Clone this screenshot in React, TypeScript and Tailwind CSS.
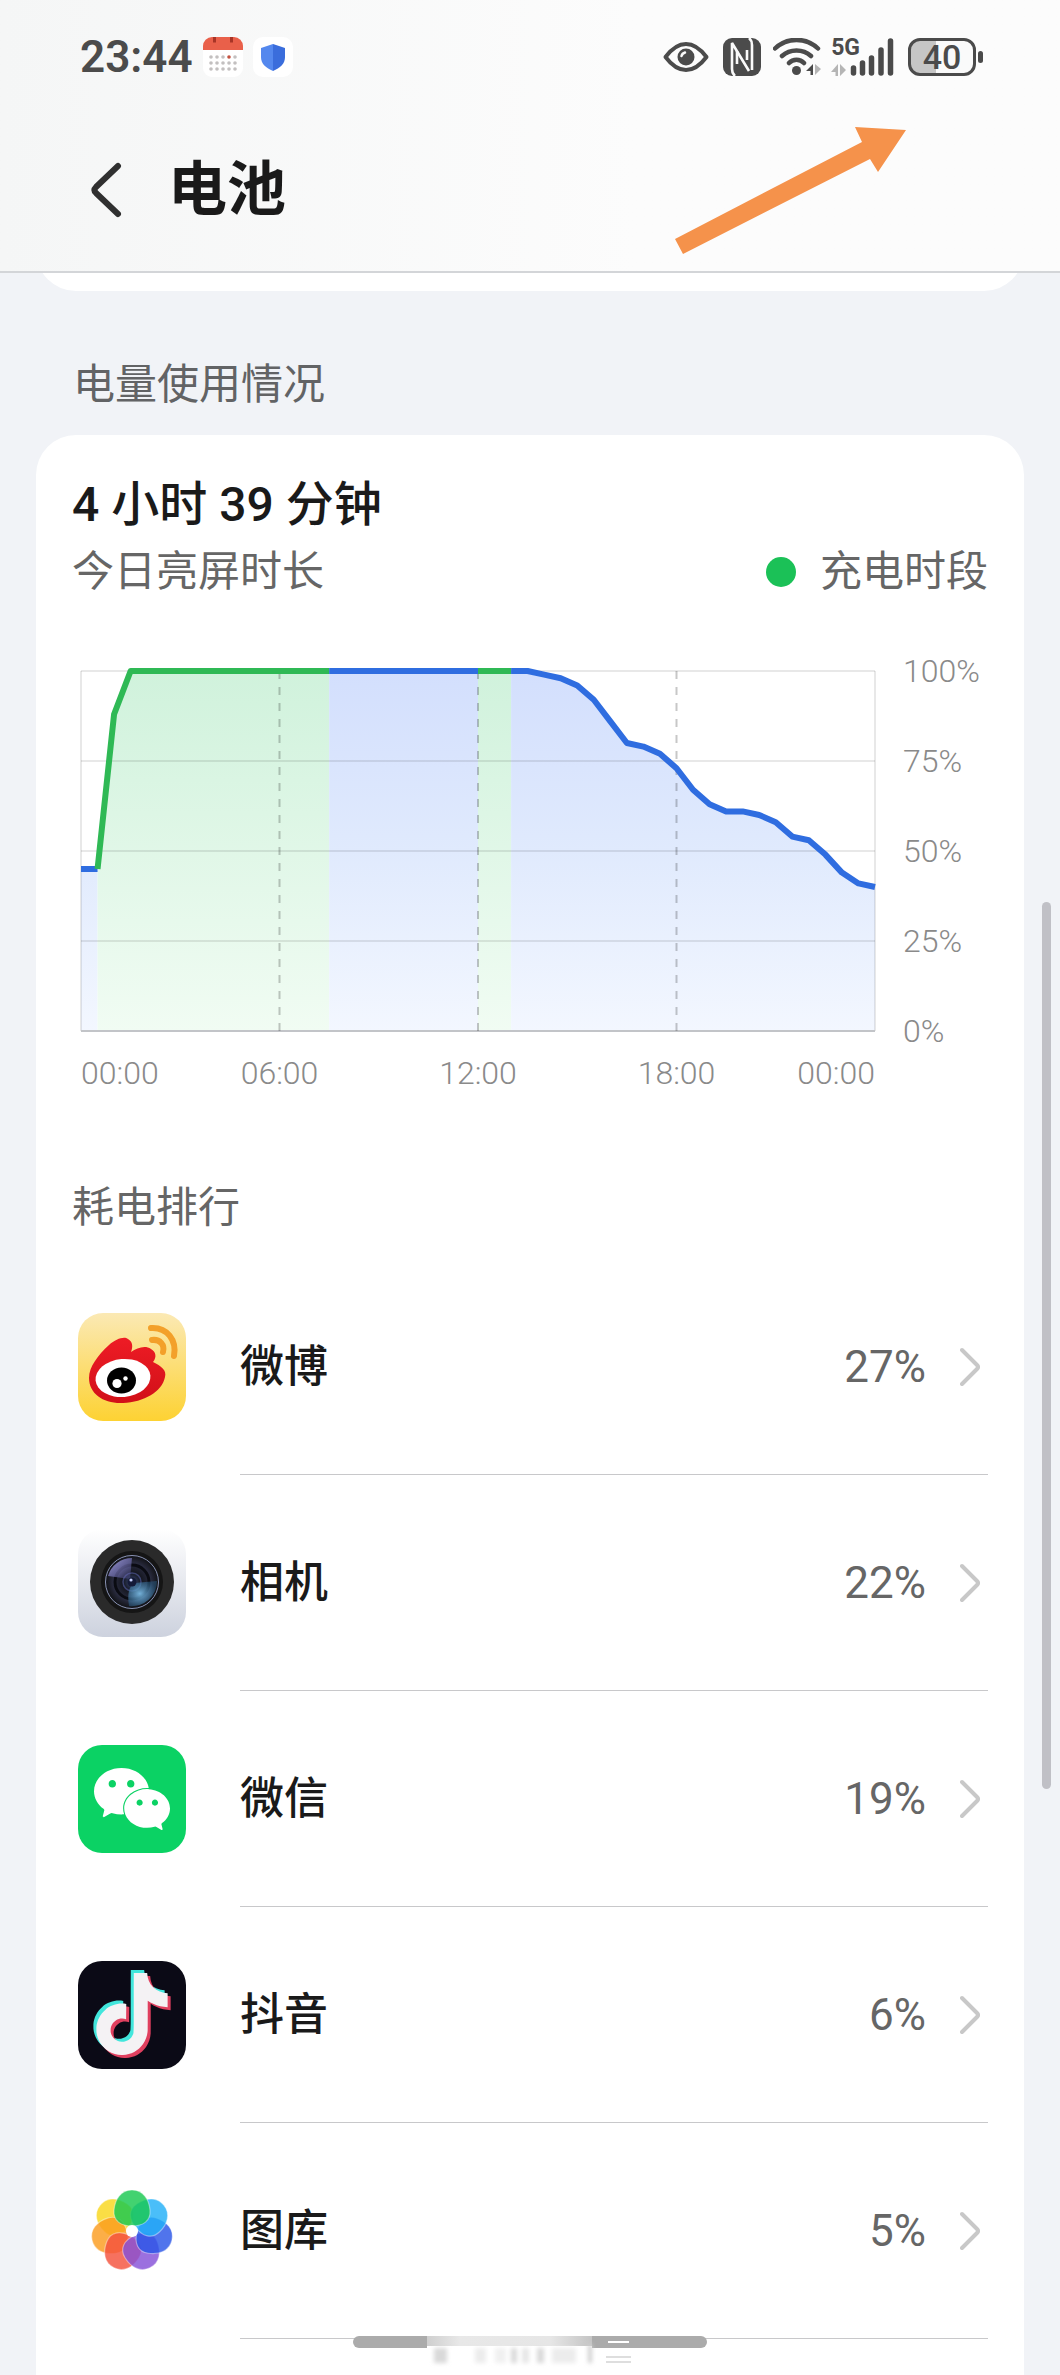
import type { ReactNode } from 'react';
import { SiTiktok, SiWechat } from 'react-icons/si';

interface AppUsage {
  name: string;
  percent: number;
  icon: ReactNode;
}

// Battery level, one reading every 30 minutes
const levels = [
  45, 45, 88, 100, 100, 100, 100, 100, 100, 100, 100, 100, 100, 100, 100, 100, 100,
  100, 100, 100, 100, 100, 100, 100, 100, 100, 100, 100, 99, 98, 96, 92, 86,
  80, 79, 77, 73, 67, 63, 61, 61, 60, 58, 54, 53, 49, 44, 41, 40,
];

const segments = [
  { from: 0, to: 1, charging: false },
  { from: 1, to: 15, charging: true },
  { from: 15, to: 24, charging: false },
  { from: 24, to: 26, charging: true },
  { from: 26, to: 48, charging: false },
];

const CHART_W = 794;
const CHART_H = 360;

const px = (i: number) => (i * CHART_W) / 48;
const py = (level: number) => CHART_H - (level * CHART_H) / 100;

function linePoints(from: number, to: number) {
  return levels
    .slice(from, to + 1)
    .map((level, i) => `${px(from + i)},${py(level)}`)
    .join(' ');
}

function BatteryChart() {
  return (
    <svg viewBox={`0 0 ${CHART_W} ${CHART_H}`} className="block w-full overflow-visible" role="img" aria-label="电量曲线">
      <defs>
        <linearGradient id="fillBlue" gradientUnits="userSpaceOnUse" x1="0" y1="0" x2="0" y2={CHART_H}>
          <stop offset="0" stopColor="#d3dffd" />
          <stop offset="0.5" stopColor="#e0eafd" />
          <stop offset="1" stopColor="#f3f7ff" />
        </linearGradient>
        <linearGradient id="fillGreen" gradientUnits="userSpaceOnUse" x1="0" y1="0" x2="0" y2={CHART_H}>
          <stop offset="0" stopColor="#d0f2dc" />
          <stop offset="1" stopColor="#f1fcf3" />
        </linearGradient>
      </defs>
      {segments.map((s) => (
        <polygon
          key={s.from}
          points={`${px(s.from)},${CHART_H} ${linePoints(s.from, s.to)} ${px(s.to)},${CHART_H}`}
          fill={s.charging ? 'url(#fillGreen)' : 'url(#fillBlue)'}
        />
      ))}
      <g stroke="#000" strokeOpacity="0.12" strokeWidth="1.5">
        {[0, 90, 180, 270].map((y) => (
          <line key={y} x1="0" x2={CHART_W} y1={y} y2={y} />
        ))}
        <line x1="0" x2="0" y1="0" y2={CHART_H} />
        <line x1={CHART_W} x2={CHART_W} y1="0" y2={CHART_H} />
      </g>
      <line x1="0" x2={CHART_W} y1={CHART_H} y2={CHART_H} stroke="#c2c4c8" strokeWidth="2" />
      {[12, 24, 36].map((i) => (
        <line key={i} x1={px(i)} x2={px(i)} y1="0" y2={CHART_H} stroke="#000" strokeOpacity="0.22" strokeWidth="2" strokeDasharray="8 8" />
      ))}
      {segments.map((s) => (
        <polyline
          key={s.from}
          points={linePoints(s.from, s.to)}
          fill="none"
          stroke={s.charging ? '#2fb955' : '#2f6de0'}
          strokeWidth="6"
          strokeLinejoin="round"
        />
      ))}
    </svg>
  );
}

function WeiboIcon() {
  return (
    <svg viewBox="0 0 108 108" className="size-27">
      <defs>
        <linearGradient id="weiboBg" x1="0" y1="0" x2="0" y2="1">
          <stop offset="0" stopColor="#fbe9b4" />
          <stop offset="1" stopColor="#fdd233" />
        </linearGradient>
        <linearGradient id="weiboRed" x1="0" y1="0" x2="0" y2="1">
          <stop offset="0" stopColor="#ee1c25" />
          <stop offset="1" stopColor="#d11018" />
        </linearGradient>
      </defs>
      <rect width="108" height="108" rx="25" fill="url(#weiboBg)" />
      <path
        d="M11 65C11 54 20 42 31 32C38 26 46 23 50 26C55 29 55 34 53 39C59 35 67 32 73 36C78 39 79 44 75 49C83 53 89 57 87 64C84 79 66 89 45 90C26 91 11 81 11 65Z"
        fill="url(#weiboRed)"
      />
      <ellipse cx="45" cy="65" rx="27.500" ry="19" fill="#fff" transform="rotate(-5 45 65)" />
      <ellipse cx="43.500" cy="67.500" rx="14.500" ry="13" fill="#000" />
      <circle cx="39" cy="70.500" r="4.600" fill="#fff" />
      <circle cx="47.500" cy="65.500" r="2.200" fill="#fff" />
      <g fill="none" stroke="#f3a02a" strokeWidth="6" strokeLinecap="round">
        <path d="M73 15C89 14 99 27 96 43" />
        <path d="M74 27C82 26 87 32 85 39" />
      </g>
    </svg>
  );
}

function CameraIcon() {
  return (
    <svg viewBox="0 0 108 108" className="size-27">
      <defs>
        <linearGradient id="camBg" x1="0" y1="0" x2="0" y2="1">
          <stop offset="0" stopColor="#ffffff" />
          <stop offset="1" stopColor="#cdd2de" />
        </linearGradient>
        <radialGradient id="camLens" cx="0.5" cy="0.5" r="0.5">
          <stop offset="0" stopColor="#3b4a78" />
          <stop offset="0.35" stopColor="#14161f" />
          <stop offset="0.7" stopColor="#2a2c40" />
          <stop offset="1" stopColor="#101114" />
        </radialGradient>
        <radialGradient id="camBlue" cx="0.4" cy="0.5" r="0.6">
          <stop offset="0" stopColor="#78b7e0" stopOpacity="0.95" />
          <stop offset="1" stopColor="#2b6490" stopOpacity="0.45" />
        </radialGradient>
        <linearGradient id="camViolet" x1="0" y1="0" x2="1" y2="1">
          <stop offset="0" stopColor="#b3aef2" />
          <stop offset="1" stopColor="#5a5aa8" stopOpacity="0.25" />
        </linearGradient>
      </defs>
      <rect width="108" height="108" rx="25" fill="url(#camBg)" />
      <circle cx="54" cy="53" r="42" fill="#2a2a2a" />
      <circle cx="54" cy="53" r="31" fill="#151515" />
      <circle cx="54" cy="53" r="26.5" fill="url(#camLens)" stroke="#8a93b5" strokeWidth="1" />
      <circle cx="54" cy="53" r="17" fill="none" stroke="#0a0b12" strokeWidth="3" />
      <circle cx="54" cy="53" r="9" fill="none" stroke="#3c4370" strokeWidth="1.5" />
      <path d="M52 50L30 47A25 25 0 0 1 54 29Z" fill="url(#camViolet)" />
      <path d="M56 54L79 52A25 25 0 0 1 51 77C49 65 51 58 56 54Z" fill="url(#camBlue)" />
      <circle cx="54" cy="53" r="4.5" fill="#141a38" />
      <circle cx="53" cy="51" r="1.6" fill="#c9d3ff" />
    </svg>
  );
}

function WechatIcon() {
  return (
    <div className="flex size-27 items-center justify-center rounded-3xl bg-[#0bd264] text-white">
      <SiWechat className="size-19" />
    </div>
  );
}

function DouyinIcon() {
  return (
    <div className="grid size-27 place-items-center rounded-3xl bg-[#0b0a16]">
      <svg viewBox="0 0 90 90" className="size-[90px]">
        <SiTiktok x="1" y="0" size={82} color="#42e6dc" />
        <SiTiktok x="7" y="6" size={82} color="#e0405f" />
        <SiTiktok x="4" y="3" size={82} color="#f4f2f4" />
      </svg>
    </div>
  );
}

const petals = [
  { angle: 129, color: '#f9d71c' },
  { angle: 77, color: '#fb9c1e' },
  { angle: 26, color: '#f4523c' },
  { angle: -26, color: '#8550d8' },
  { angle: -77, color: '#2a55e8' },
  { angle: -129, color: '#22b0f8' },
  { angle: 180, color: '#18c850' },
];

function GalleryIcon() {
  return (
    <svg viewBox="0 0 108 108" className="size-27">
      <g transform="translate(54 54)">
        {petals.map((p) => (
          <path
            key={p.angle}
            transform={`rotate(${p.angle})`}
            d="M0 41C11 41 17 32 18 21C19 10 11 5 0 5C-11 5 -19 10 -18 21C-17 32 -11 41 0 41Z"
            fill={p.color}
            fillOpacity="0.82"
            stroke="#fff"
            strokeOpacity="0.4"
            strokeWidth="1.2"
          />
        ))}
        <circle r="6" fill="#fff" />
      </g>
    </svg>
  );
}

const apps: AppUsage[] = [
  { name: '微博', percent: 27, icon: <WeiboIcon /> },
  { name: '相机', percent: 22, icon: <CameraIcon /> },
  { name: '微信', percent: 19, icon: <WechatIcon /> },
  { name: '抖音', percent: 6, icon: <DouyinIcon /> },
  { name: '图库', percent: 5, icon: <GalleryIcon /> },
];

function CalendarBadge() {
  return (
    <svg viewBox="0 0 40 40" className="size-10">
      <rect width="40" height="40" rx="9" fill="#fff" />
      <path d="M0 13V9A9 9 0 0 1 9 0H31A9 9 0 0 1 40 9V13Z" fill="#e9604a" />
      <path d="M11.500 0V5.500M28.500 0V5.500" stroke="#a83426" strokeWidth="3" />
      {[20, 26, 32].map((y) =>
        [8, 14, 20, 26, 32].map((x) => (
          <circle key={`${x}-${y}`} cx={x} cy={y} r="1.8" fill={x === 26 && y === 20 ? '#c4513f' : '#c3c0c0'} />
        ))
      )}
    </svg>
  );
}

function ShieldBadge() {
  return (
    <svg viewBox="0 0 40 40" className="size-10">
      <rect width="40" height="40" rx="10" fill="#fff" />
      <path d="M20 7L8 11V20C8 27 13 31 20 34Z" fill="#5488ee" />
      <path d="M20 7L32 11V20C32 27 27 31 20 34Z" fill="#3a6ddc" />
    </svg>
  );
}

function StatusBar() {
  return (
    <div className="flex items-center justify-between pt-8 pr-[77px] pl-20 text-[#4b4b4b]">
      <div className="flex items-center gap-2.5">
        <span className="font-[Roboto] text-[44px] leading-[50px] font-semibold">23:44</span>
        <div className="flex gap-2.5">
          <CalendarBadge />
          <ShieldBadge />
        </div>
      </div>
      <div className="flex items-center">
        <svg viewBox="0 0 46 32" className="h-8 w-[46px]" fill="none" stroke="currentColor" strokeWidth="4">
          <path d="M2.500 16C10 6 17 3 23 3S36 6 43.500 16C36 26 29 29 23 29S10 26 2.500 16Z" strokeLinejoin="round" />
          <circle cx="23" cy="16" r="8.500" fill="currentColor" stroke="none" />
          <path d="M18.500 15A5 5 0 0 1 22 11.500" stroke="#fafafa" strokeWidth="2.500" strokeLinecap="round" />
        </svg>
        <svg viewBox="0 0 38 38" className="ml-3.5 size-[38px]" fill="none">
          <rect width="38" height="38" rx="9" fill="currentColor" />
          <path d="M12 38C9.500 36 9 34 9 31V5L26 33" stroke="#fafafa" strokeWidth="2.600" strokeLinejoin="bevel" />
          <path d="M26 0C28.500 2 29 4 29 7V32M14 13V26M24 12V22" stroke="#fafafa" strokeWidth="2.600" />
        </svg>
        <svg viewBox="0 0 48 38" className="ml-3 h-[38px] w-12" fill="none" stroke="currentColor" strokeWidth="4.500">
          <path d="M2 10.500C14 -1 33 -1 45 10.500M9 18C17 10.500 30 10.500 38 18M16 25C20 20.500 27 20.500 31 25" strokeLinecap="round" />
          <circle cx="23.500" cy="32.500" r="4.500" fill="currentColor" stroke="none" />
          <path d="M40 26V37H37.500V33H33Z" fill="currentColor" stroke="none" />
          <path d="M42 26V37L48 31Z" fill="#b5b5b5" stroke="none" />
        </svg>
        <div className="ml-2.5 flex items-end">
          <div className="-mr-2.5 flex h-[38px] flex-col justify-between">
            <span className="font-[Roboto] text-[23px] leading-[20px] font-bold">5G</span>
            <svg viewBox="0 0 16 12" className="h-3 w-4" fill="#b5b5b5">
              <path d="M7 0V12H4.500V8H0ZM9 0V12L15 6Z" />
            </svg>
          </div>
          <svg viewBox="0 0 44 38" className="h-[38px] w-11" stroke="currentColor" strokeWidth="5.500" strokeLinecap="round">
            <path d="M3.500 30V35M12.500 25V35M21.500 20V35M31 12V35M40.500 3V35" />
          </svg>
        </div>
        <div className="ml-3.5 flex items-center gap-0.5">
          <div className="flex h-[38px] w-[68px] items-center justify-center rounded-xl border-3 border-current bg-linear-to-r from-[#c6c6c6] from-40% to-[#fafafa] to-40%">
            <span className="font-[Roboto] text-[34px] leading-8 font-medium">40</span>
          </div>
          <div className="h-3 w-[5px] rounded-sm bg-current" />
        </div>
      </div>
    </div>
  );
}

export default function App() {
  return (
    <div className="relative min-h-screen overflow-hidden bg-[#f1f3f7] font-['Roboto','Noto_Sans_CJK_SC',sans-serif] text-[#1a1a1a]">
      <header className="relative h-[273px] border-b-2 border-[#d3d5d8] bg-linear-to-r from-[#f5f6f6] to-[#fcfcfc] to-60%">
        <StatusBar />
        <div className="flex items-center gap-[46px] pt-[68px] pl-[90px]">
          <button type="button" aria-label="返回" className="text-[#303030]">
            <svg viewBox="0 0 32 56" className="h-14 w-8" fill="none" stroke="currentColor" strokeWidth="6" strokeLinecap="round" strokeLinejoin="round">
              <path d="M28 4L6 25Q3 28 6 31L28 52" />
            </svg>
          </button>
          <h1 className="text-[59px] leading-[80px] font-bold">电池</h1>
        </div>
        <svg viewBox="0 0 232 128" className="absolute top-[127px] right-[154px] h-32 w-[232px]" fill="#f5924b" aria-hidden="true">
          <path d="M232 3L181 0L188 15L1 112L9 127L196 32L204 45Z" />
        </svg>
      </header>

      <main className="px-9">
        <div className="flex h-[18px] items-end overflow-hidden">
          <div className="h-24 flex-1 shrink-0 rounded-b-[40px] bg-white" />
        </div>
        <h2 className="pt-[63px] pb-[19px] pl-[37px] text-[42px] leading-[62px] text-[#626365]">电量使用情况</h2>

        <section className="rounded-t-[40px] bg-white px-9 pt-9 pb-9">
          <p className="text-[48px] leading-[68px] font-medium">4 小时 39 分钟</p>
          <div className="flex items-center justify-between text-[42px] leading-[66px] text-[#666]">
            <span>今日亮屏时长</span>
            <span className="flex items-center gap-6">
              <span className="size-[30px] rounded-full bg-[#1bc157]" />
              充电时段
            </span>
          </div>

          <div className="mt-12 flex gap-7 pl-[9px] text-[32px] leading-9 font-light text-[#8a8a8a]">
            <div className="flex-1 pt-[18px]">
              <BatteryChart />
              <div className="mt-6 grid grid-cols-8">
                <span>00:00</span>
                <span className="col-span-2 text-center">06:00</span>
                <span className="col-span-2 text-center">12:00</span>
                <span className="col-span-2 text-center">18:00</span>
                <span className="flex justify-end">00:00</span>
              </div>
            </div>
            <div className="flex h-[396px] w-[85px] flex-col justify-between">
              <span>100%</span>
              <span>75%</span>
              <span>50%</span>
              <span>25%</span>
              <span>0%</span>
            </div>
          </div>

          <h3 className="mt-[86px] text-[42px] leading-[62px] text-[#666]">耗电排行</h3>
          <ul className="mt-5">
            {apps.map((app) => (
              <li key={app.name}>
                <a href="#" className="flex h-54 items-center pl-1.5">
                  {app.icon}
                  <span className="ml-[54px] flex flex-1 items-center self-stretch border-b border-[#c8c8ca]">
                    <span className="flex-1 text-[44px] font-medium">{app.name}</span>
                    <span className="text-[44px] text-[#666]">{app.percent}%</span>
                    <svg viewBox="0 0 20 40" className="mr-2 ml-[34px] h-10 w-5" fill="none" stroke="#c8c8c8" strokeWidth="4" strokeLinecap="round" strokeLinejoin="round">
                      <path d="M2 3L17 18Q19 20 17 22L2 37" />
                    </svg>
                  </span>
                </a>
              </li>
            ))}
          </ul>
        </section>
      </main>

      <div className="absolute top-[902px] right-[9px] h-[887px] w-[9px] rounded-full bg-[#c0c0c6]" />

      <div className="absolute inset-x-0 bottom-0 flex h-[39px] justify-center">
        <svg viewBox="0 0 354 39" className="h-[39px] w-[354px]" aria-hidden="true">
          <defs>
            <filter id="smear" x="-10%" y="-30%" width="120%" height="160%">
              <feGaussianBlur stdDeviation="2" />
            </filter>
            <linearGradient id="fade" x1="0" y1="0" x2="1" y2="0">
              <stop offset="0" stopColor="#cfcfcf" />
              <stop offset="0.2" stopColor="#e8e8e8" />
              <stop offset="0.75" stopColor="#e6e6e6" />
              <stop offset="1" stopColor="#c4c4c4" />
            </linearGradient>
          </defs>
          <rect width="354" height="12" rx="6" fill="#ababab" />
          <rect x="74" width="165" height="13" fill="#fff" />
          <rect x="74" width="165" height="10" fill="url(#fade)" />
          <g filter="url(#smear)" fill="#d9d9d9">
            <rect x="81" y="12" width="13" height="15" />
            <rect x="122" y="12" width="11" height="15" fill="#ececec" />
            <rect x="142" y="12" width="11" height="15" fill="#f0f0f0" />
            <rect x="158" y="12" width="6" height="15" />
            <rect x="169" y="12" width="7" height="15" fill="#e6e6e6" />
            <rect x="184" y="12" width="7" height="15" />
            <rect x="199" y="12" width="24" height="15" fill="#ececec" />
            <rect x="235" y="8" width="4" height="19" fill="#cfcfcf" />
          </g>
          <rect x="255" y="5" width="21" height="2" fill="#fff" />
          <path d="M253 21H278M253 26H278" stroke="#d4d4d4" strokeWidth="1.500" />
        </svg>
      </div>
    </div>
  );
}
